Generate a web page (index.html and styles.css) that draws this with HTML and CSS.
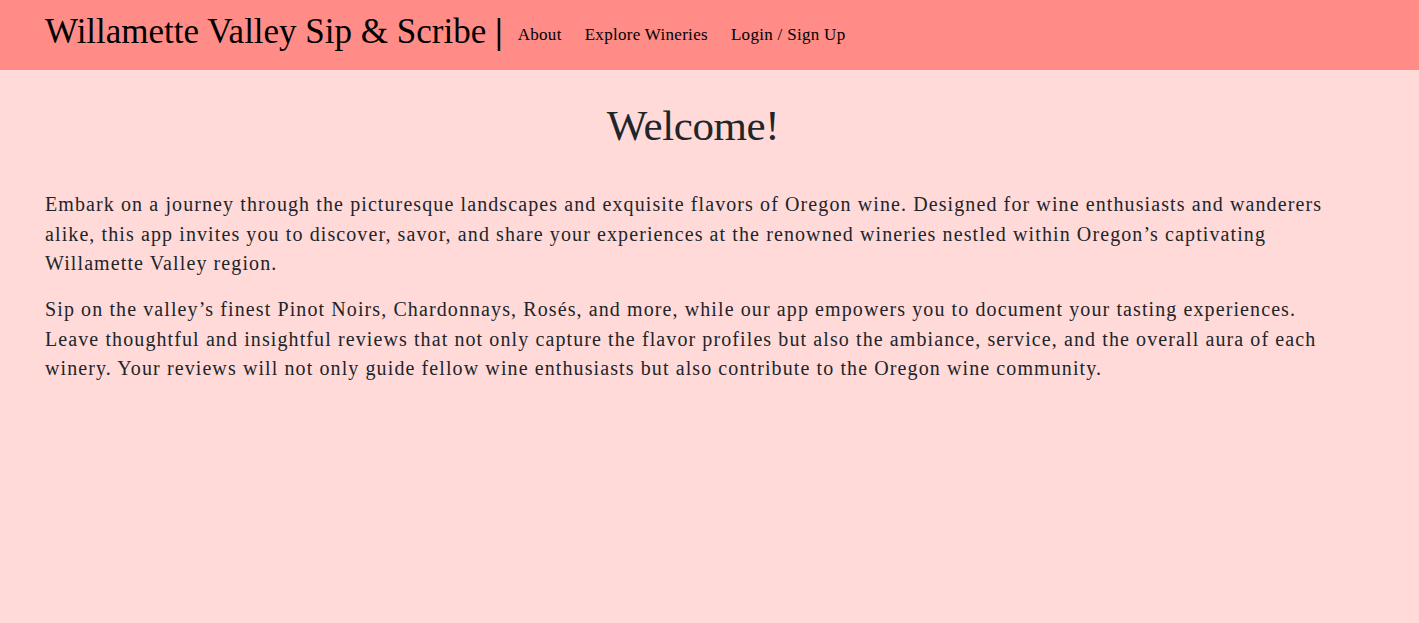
FILE: index.html
```html
<!DOCTYPE html>
<html lang="en">
<head>
<meta charset="utf-8">
<title>Willamette Valley Sip &amp; Scribe</title>
<link rel="stylesheet" href="styles.css">
</head>
<body>
<header class="navbar">
  <div class="nav-inner">
    <a class="brand" href="#">Willamette Valley Sip &amp; Scribe <span class="bar">|</span></a>
    <nav class="links">
      <a href="#">About</a>
      <a href="#">Explore Wineries</a>
      <a href="#">Login / Sign Up</a>
    </nav>
  </div>
</header>
<main class="content">
  <h1 class="title">Welcome!</h1>
  <p>Embark on a journey through the picturesque landscapes and exquisite flavors of Oregon wine. Designed for wine enthusiasts and wanderers alike, this app invites you to discover, savor, and share your experiences at the renowned wineries nestled within Oregon’s captivating Willamette Valley region.</p>
  <p>Sip on the valley’s finest Pinot Noirs, Chardonnays, Rosés, and more, while our app empowers you to document your tasting experiences. Leave thoughtful and insightful reviews that not only capture the flavor profiles but also the ambiance, service, and the overall aura of each winery. Your reviews will not only guide fellow wine enthusiasts but also contribute to the Oregon wine community.</p>
</main>
</body>
</html>
```

FILE: styles.css
```css
* { box-sizing: border-box; }
html, body { margin: 0; padding: 0; }
body {
  background: #ffdad9;
  color: #212529;
  font-family: "Liberation Serif", "Times New Roman", serif;
  min-height: 100vh;
}
.navbar {
  background: #ff8c87;
  height: 70px;
}
.nav-inner {
  display: flex;
  align-items: center;
  height: 100%;
  padding: 0 45px;
}
.brand {
  color: #000;
  text-decoration: none;
  font-size: 35px;
  margin-right: 15px;
  padding-bottom: 6px;
  white-space: nowrap;
}
.bar {
  font-weight: bold;
}
.links {
  display: flex;
  gap: 23px;
}
.links a {
  color: #000;
  text-decoration: none;
  font-size: 17px;
  letter-spacing: 0.3px;
}
.content {
  padding: 30px 45px 0;
  max-width: 1386px;
}
.title {
  text-align: center;
  font-weight: normal;
  font-size: 43px;
  letter-spacing: -0.4px;
  line-height: 52px;
  margin: 0 0 38px;
}
.content p {
  font-size: 20px;
  letter-spacing: 1.1px;
  line-height: 29.5px;
  margin: 0 0 16.5px;
}
```
